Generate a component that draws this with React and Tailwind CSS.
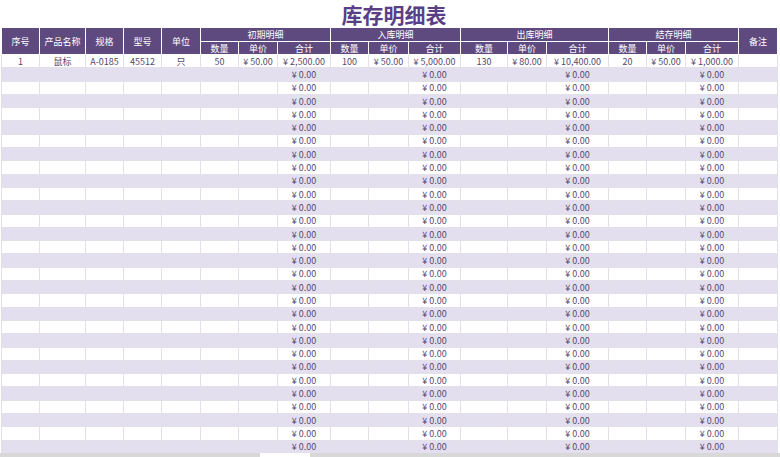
const cols=[38,46,38,38,39,38,39,53,38,40,52,47,39,62,38,39,53,39];
const data1=["1","鼠标","A-0185","45512","只","50","¥ 50.00","¥ 2,500.00","100","¥ 50.00","¥ 5,000.00","130","¥ 80.00","¥ 10,400.00","20","¥ 50.00","¥ 1,000.00",""];
const F={fontFamily:'"Noto Sans CJK SC","Liberation Sans",sans-serif'};
export default function App(){
  const rows=[];
  for(let i=0;i<29;i++){
    const r=Array(18).fill("");r[7]="¥ 0.00";r[10]="¥ 0.00";r[13]="¥ 0.00";r[16]="¥ 0.00";rows.push(r);
  }
  const th="border border-white text-white font-normal p-0 leading-none";
  return(<div className="w-[780px] h-[457px] bg-white overflow-hidden relative" style={F}>
    <div className="h-[27px] flex items-center justify-center text-[21px] leading-[27px] font-bold text-[#5b3f86] pl-[8px] pt-[1px]">库存明细表</div>
    <table className="border-collapse table-fixed text-[9px] ml-[1px]" style={{width:776}}>
      <colgroup>{cols.map((w,i)=><col key={i} style={{width:w}}/>)}</colgroup>
      <thead className="bg-[#5f4a80]">
        <tr className="h-[14px]">
          {["序号","产品名称","规格","型号","单位"].map(t=><th key={t} rowSpan={2} className={th}>{t}</th>)}
          {["初期明细","入库明细","出库明细","结存明细"].map(t=><th key={t} colSpan={3} className={th}>{t}</th>)}
          <th rowSpan={2} className={th}>备注</th>
        </tr>
        <tr className="h-[13px]">
          {[0,1,2,3].flatMap(g=>["数量","单价","合计"].map(t=><th key={g+t} className={th}>{t}</th>))}
        </tr>
      </thead>
      <tbody className="text-[#56476f]">
        {[data1,...rows].map((r,i)=><tr key={i} className={"h-[13.3px] "+(i%2?"bg-[#e3dfee]":"bg-white")}>
          {r.map((c,j)=><td key={j} className="border border-[#e3e0ea] text-center p-0 leading-none whitespace-pre">{c}</td>)}
        </tr>)}
      </tbody>
    </table>
    <div className="absolute left-0 right-0 bottom-0 h-[4px] bg-[#d8d8d8]"><div className="absolute left-[260px] w-[50px] h-full bg-white"/></div>
  </div>);
}
